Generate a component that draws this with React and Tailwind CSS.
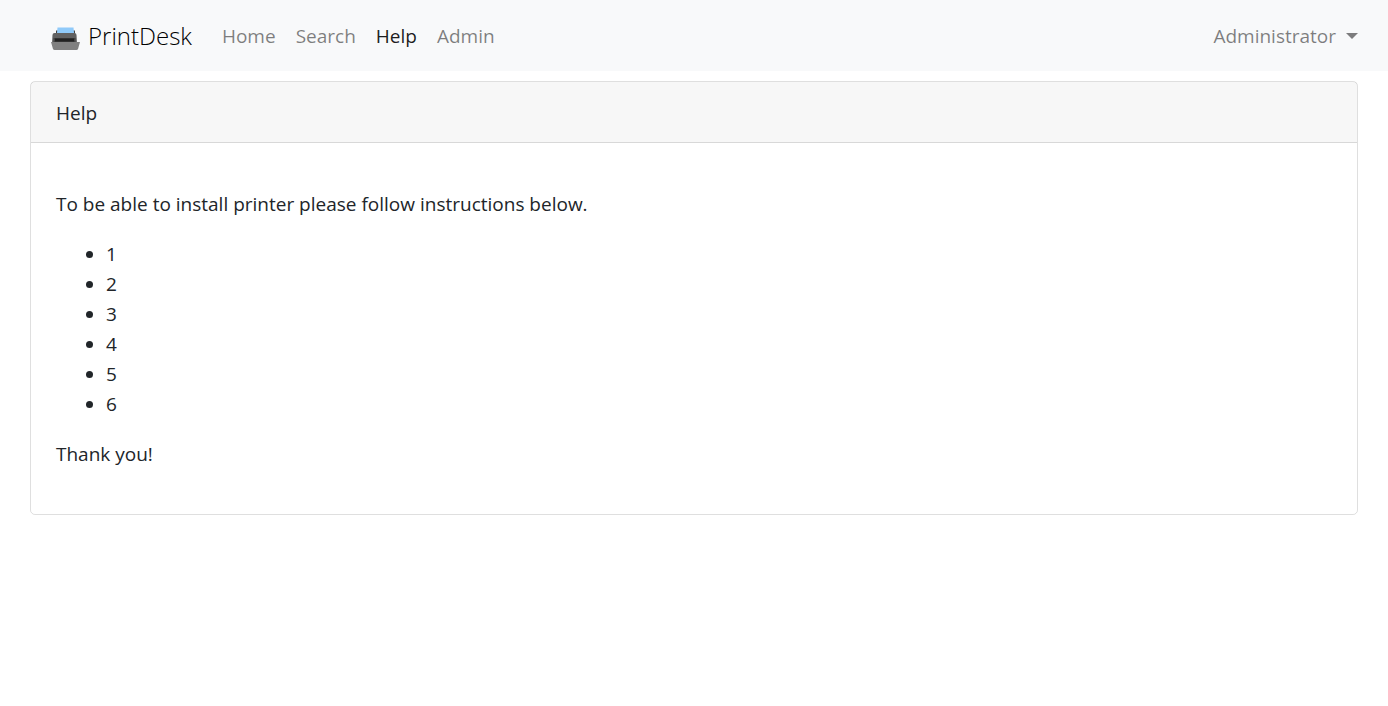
const links = ["Home", "Search", "Help", "Admin"];
const steps = [1, 2, 3, 4, 5, 6];

function PrinterIcon() {
  return (
    <svg className="h-[31px] w-[30px]" viewBox="0 0 30 31" aria-hidden="true">
      <path d="M6 10.5h19v3H6z" fill="#424242" />
      <path d="M7.500 7.500h16l.5 5.500H7z" fill="#90caf9" />
      <path d="M4.500 13h20a2 2 0 0 1 2 2l.5 8H2l.5-8a2 2 0 0 1 2-2z" fill="#616161" />
      <path d="M3.500 18h22v4.500h-22z" fill="#424242" />
      <path d="M5 18.500h19v3H5z" fill="#212121" />
      <path d="M1 22h29l-2 7a2 2 0 0 1-1.500 1h-22A2 2 0 0 1 3 29z" fill="#808080" />
    </svg>
  );
}

export default function App() {
  return (
    <div className="font-['Open_Sans',sans-serif] text-[19px] leading-[30px] text-[#212529]">
      <nav className="flex items-center bg-[#f8f9fa] px-[30px] py-[10px]">
        <a href="#home" className="ml-5 mr-5 flex items-center gap-2 py-2 text-2xl font-light leading-[35px] text-black">
          <PrinterIcon />
          PrintDesk
        </a>
        <ul className="flex">
          {links.map((l) => (
            <li key={l}>
              <a href={"#" + l.toLowerCase()} className={l === "Help" ? "px-[10px] text-black/90" : "px-[10px] text-black/50"}>{l}</a>
            </li>
          ))}
        </ul>
        <button type="button" className="ml-auto flex items-center gap-[10px] text-black/50">
          Administrator
          <span className="border-x-6 border-t-6 border-x-transparent border-t-current" />
        </button>
      </nav>
      <main className="px-[30px] pt-[10px]">
        <section className="rounded-[5px] border border-black/[.125]">
          <h1 className="border-b border-black/[.125] bg-black/[.03] px-[25px] pt-4 pb-[14px]">Help</h1>
          <div className="px-[25px] pt-[46px] pb-[45px]">
            <p className="mb-5">To be able to install printer please follow instructions below.</p>
            <ul className="mb-5 list-disc pl-[50px]">
              {steps.map((s) => <li key={s}>{s}</li>)}
            </ul>
            <p>Thank you!</p>
          </div>
        </section>
      </main>
    </div>
  );
}
